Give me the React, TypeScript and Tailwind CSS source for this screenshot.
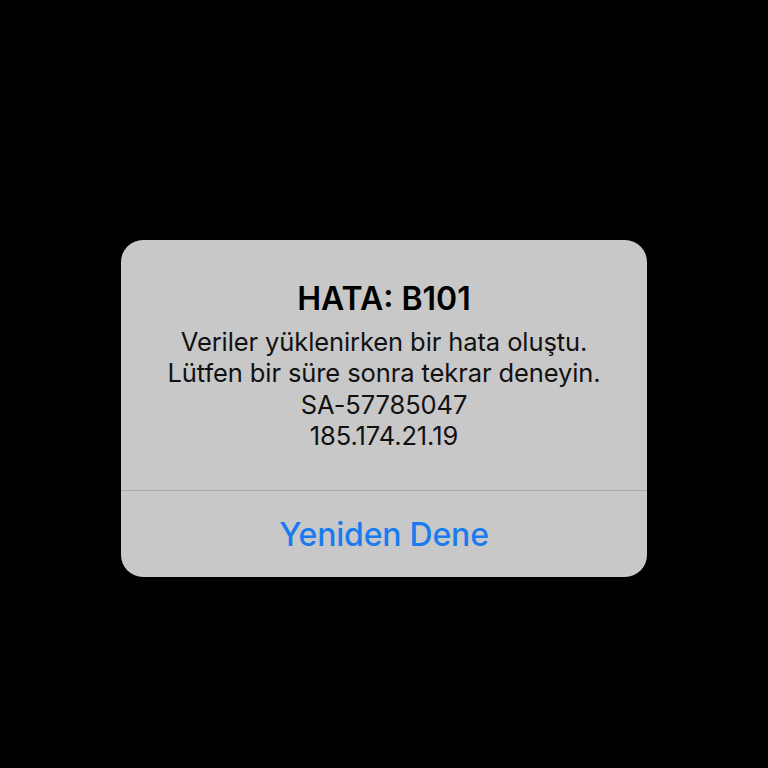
export default function App() {
  return (
    <div className="flex min-h-screen w-full justify-center bg-black pt-[240px] font-['Inter','Noto_Sans',sans-serif]">
      <div className="flex h-[337px] w-[526px] flex-col overflow-hidden rounded-[22px] bg-[#c8c8c8]">
        <div className="flex flex-1 flex-col items-center pt-[41px] text-center">
          <h1 className="text-[32px] font-semibold leading-[36px] text-black">HATA: B101</h1>
          <div className="mt-[9px] text-[25.5px] leading-[31.3px] tracking-[-0.1px] text-[#111]">
            <p>Veriler yüklenirken bir hata oluştu.</p>
            <p>Lütfen bir süre sonra tekrar deneyin.</p>
            <p>SA-57785047</p>
            <p>185.174.21.19</p>
          </div>
        </div>
        <div className="h-px w-full bg-[#a9a9a9]" />
        <button
          type="button"
          className="flex h-[86px] w-full items-center justify-center pt-[2px] text-[32px] font-medium tracking-[-0.2px] text-[#1a7bf0]"
        >
          Yeniden Dene
        </button>
      </div>
    </div>
  );
}
